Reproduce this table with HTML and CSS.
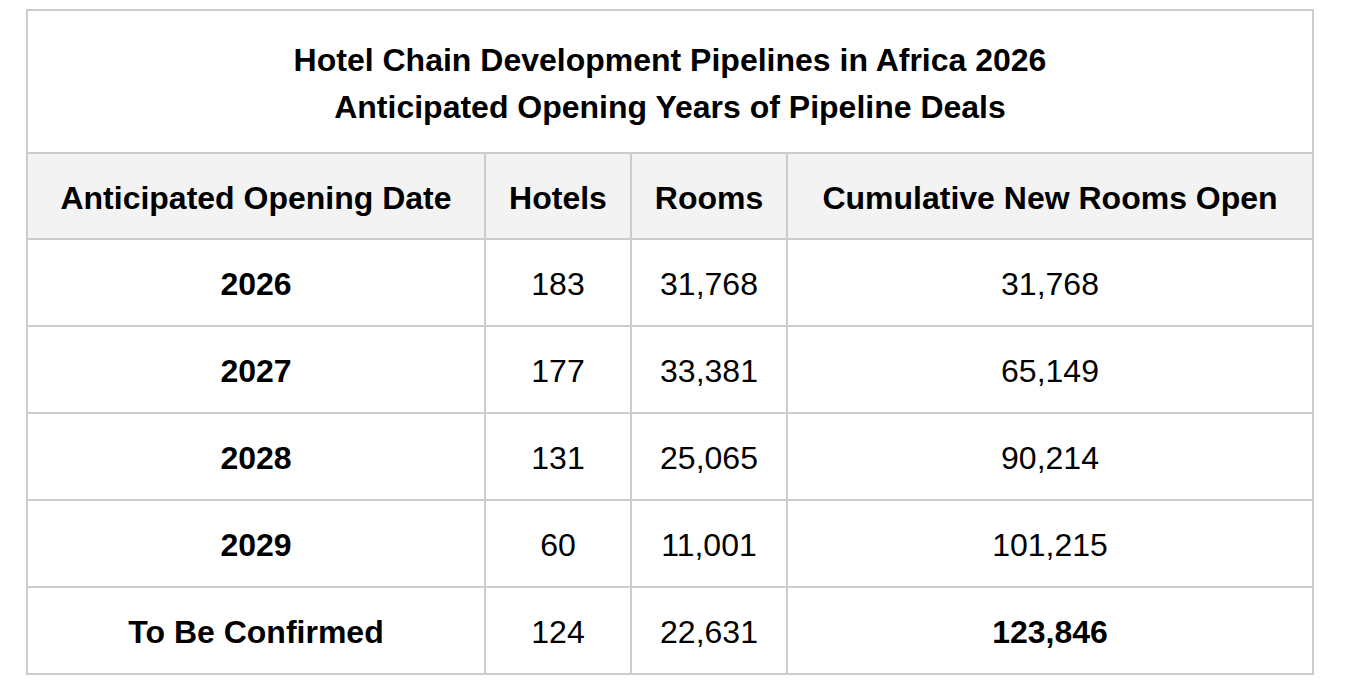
FILE: index.html
```html
<!DOCTYPE html>
<html>
<head>
<meta charset="utf-8">
<link rel="stylesheet" href="styles.css">
</head>
<body>
<table class="pipeline">
  <colgroup>
    <col class="c1"><col class="c2"><col class="c3"><col class="c4">
  </colgroup>
  <tr class="title-row">
    <td colspan="4"><div>Hotel Chain Development Pipelines in Africa 2026</div><div>Anticipated Opening Years of Pipeline Deals</div></td>
  </tr>
  <tr class="head-row">
    <th>Anticipated Opening Date</th><th>Hotels</th><th>Rooms</th><th>Cumulative New Rooms Open</th>
  </tr>
  <tr class="data-row"><td class="yr">2026</td><td>183</td><td>31,768</td><td>31,768</td></tr>
  <tr class="data-row"><td class="yr">2027</td><td>177</td><td>33,381</td><td>65,149</td></tr>
  <tr class="data-row"><td class="yr">2028</td><td>131</td><td>25,065</td><td>90,214</td></tr>
  <tr class="data-row"><td class="yr">2029</td><td>60</td><td>11,001</td><td>101,215</td></tr>
  <tr class="data-row"><td class="yr">To Be Confirmed</td><td>124</td><td>22,631</td><td class="total">123,846</td></tr>
</table>
</body>
</html>
```
FILE: styles.css
```css
html, body {
  margin: 0;
  padding: 0;
  background: #ffffff;
}
body {
  padding: 9px 0 0 26px;
  font-family: "Liberation Sans", Arial, sans-serif;
  color: #000000;
}
.pipeline {
  border-collapse: separate;
  border-spacing: 0;
  table-layout: fixed;
  width: 1288px;
  border-left: 2px solid #cccccc;
  border-top: 2px solid #cccccc;
}
.c1 { width: 458px; }
.c2 { width: 146px; }
.c3 { width: 156px; }
.c4 { width: 526px; }
.pipeline td, .pipeline th {
  border-right: 2px solid #cccccc;
  border-bottom: 2px solid #cccccc;
  padding: 4px 0 0 0;
  text-align: center;
  vertical-align: middle;
  font-size: 32px;
  line-height: 37px;
  box-sizing: border-box;
}
.title-row td {
  height: 143px;
  font-weight: bold;
  line-height: 47px;
  padding-top: 5px;
}
.head-row th {
  height: 86px;
  background: #f3f3f3;
  font-weight: bold;
}
.data-row td {
  height: 87px;
  font-weight: normal;
}
.data-row td.yr, .data-row td.total {
  font-weight: bold;
}
```
